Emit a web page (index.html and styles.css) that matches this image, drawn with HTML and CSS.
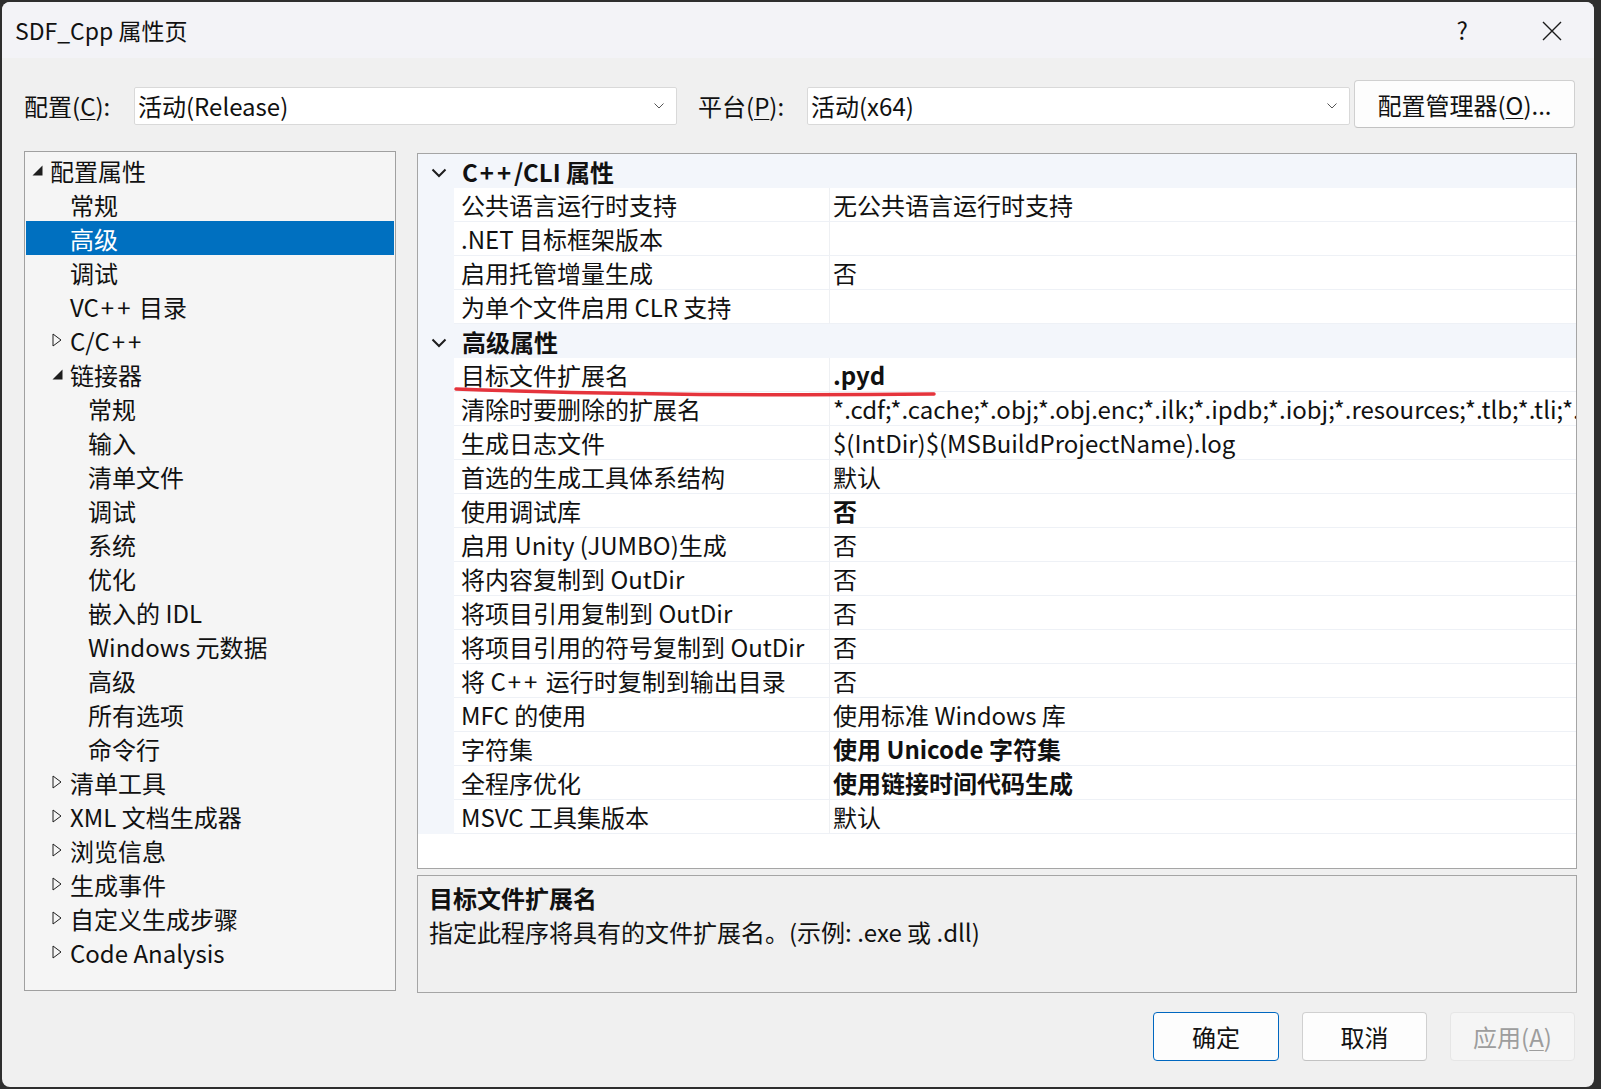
FILE: index.html
```html
<!DOCTYPE html>
<html lang="zh-CN">
<head>
    <meta charset="UTF-8">
    <title>SDF_Cpp 属性页</title>
    <link rel="stylesheet" href="styles.css">
</head>
<body>
<div class="dialog">
    <div class="titlebar">
        <span class="title">SDF_Cpp 属性页</span>
        <span class="help">?</span>
        <svg class="close" width="20" height="20" viewBox="0 0 20 20"><path d="M1 1L19 19M19 1L1 19" stroke="#1a1a1a" stroke-width="1.4" fill="none"/></svg>
    </div>

    <div class="config-row">
        <span class="field-label">配置(<u>C</u>):</span>
        <div class="combo">
            <span class="combo-text">活动(Release)</span>
            <svg class="combo-arrow" width="10" height="6" viewBox="0 0 10 6"><path d="M0.5 0.5L5 5L9.5 0.5" stroke="#555" fill="none"/></svg>
        </div>
        <span class="field-label field-label-2">平台(<u>P</u>):</span>
        <div class="combo">
            <span class="combo-text">活动(x64)</span>
            <svg class="combo-arrow" width="10" height="6" viewBox="0 0 10 6"><path d="M0.5 0.5L5 5L9.5 0.5" stroke="#555" fill="none"/></svg>
        </div>
        <button class="btn btn-manager">配置管理器(<u>O</u>)...</button>
    </div>

    <div class="main">
        <div class="tree">
            <div class="node lvl0"><span class="twisty"><svg width="11" height="11" viewBox="0 0 11 11"><polygon points="10.5,0.5 10.5,10.5 0.5,10.5" fill="#1e1e1e"/></svg></span><span>配置属性</span></div>
            <div class="node lvl1"><span class="twisty"></span><span>常规</span></div>
            <div class="node lvl1 selected"><span class="twisty"></span><span>高级</span></div>
            <div class="node lvl1"><span class="twisty"></span><span>调试</span></div>
            <div class="node lvl1"><span class="twisty"></span><span>VC<span class="plus">++</span> 目录</span></div>
            <div class="node lvl1"><span class="twisty"><svg width="10" height="14" viewBox="0 0 10 14"><polygon points="1,1 9,7 1,13" fill="none" stroke="#1e1e1e"/></svg></span><span>C/C<span class="plus">++</span></span></div>
            <div class="node lvl1"><span class="twisty"><svg width="11" height="11" viewBox="0 0 11 11"><polygon points="10.5,0.5 10.5,10.5 0.5,10.5" fill="#1e1e1e"/></svg></span><span>链接器</span></div>
            <div class="node lvl2"><span class="twisty"></span><span>常规</span></div>
            <div class="node lvl2"><span class="twisty"></span><span>输入</span></div>
            <div class="node lvl2"><span class="twisty"></span><span>清单文件</span></div>
            <div class="node lvl2"><span class="twisty"></span><span>调试</span></div>
            <div class="node lvl2"><span class="twisty"></span><span>系统</span></div>
            <div class="node lvl2"><span class="twisty"></span><span>优化</span></div>
            <div class="node lvl2"><span class="twisty"></span><span>嵌入的 IDL</span></div>
            <div class="node lvl2"><span class="twisty"></span><span>Windows 元数据</span></div>
            <div class="node lvl2"><span class="twisty"></span><span>高级</span></div>
            <div class="node lvl2"><span class="twisty"></span><span>所有选项</span></div>
            <div class="node lvl2"><span class="twisty"></span><span>命令行</span></div>
            <div class="node lvl1"><span class="twisty"><svg width="10" height="14" viewBox="0 0 10 14"><polygon points="1,1 9,7 1,13" fill="none" stroke="#1e1e1e"/></svg></span><span>清单工具</span></div>
            <div class="node lvl1"><span class="twisty"><svg width="10" height="14" viewBox="0 0 10 14"><polygon points="1,1 9,7 1,13" fill="none" stroke="#1e1e1e"/></svg></span><span>XML 文档生成器</span></div>
            <div class="node lvl1"><span class="twisty"><svg width="10" height="14" viewBox="0 0 10 14"><polygon points="1,1 9,7 1,13" fill="none" stroke="#1e1e1e"/></svg></span><span>浏览信息</span></div>
            <div class="node lvl1"><span class="twisty"><svg width="10" height="14" viewBox="0 0 10 14"><polygon points="1,1 9,7 1,13" fill="none" stroke="#1e1e1e"/></svg></span><span>生成事件</span></div>
            <div class="node lvl1"><span class="twisty"><svg width="10" height="14" viewBox="0 0 10 14"><polygon points="1,1 9,7 1,13" fill="none" stroke="#1e1e1e"/></svg></span><span>自定义生成步骤</span></div>
            <div class="node lvl1"><span class="twisty"><svg width="10" height="14" viewBox="0 0 10 14"><polygon points="1,1 9,7 1,13" fill="none" stroke="#1e1e1e"/></svg></span><span>Code Analysis</span></div>
        </div>

        <div class="right">
            <div class="grid">
                <div class="cat"><svg class="cat-arrow" width="16" height="10" viewBox="0 0 16 10"><path d="M1.5 1.5L8 8L14.5 1.5" stroke="#1e1e1e" stroke-width="2" fill="none"/></svg><span>C<span class="plus">++</span>/CLI 属性</span></div>
                <div class="prop"><div class="prop-name">公共语言运行时支持</div><div class="prop-value">无公共语言运行时支持</div></div>
                <div class="prop"><div class="prop-name">.NET 目标框架版本</div><div class="prop-value"></div></div>
                <div class="prop"><div class="prop-name">启用托管增量生成</div><div class="prop-value">否</div></div>
                <div class="prop"><div class="prop-name">为单个文件启用 CLR 支持</div><div class="prop-value"></div></div>
                <div class="cat"><svg class="cat-arrow" width="16" height="10" viewBox="0 0 16 10"><path d="M1.5 1.5L8 8L14.5 1.5" stroke="#1e1e1e" stroke-width="2" fill="none"/></svg><span>高级属性</span></div>
                <div class="prop"><div class="prop-name">目标文件扩展名</div><div class="prop-value bold">.pyd</div></div>
                <div class="prop"><div class="prop-name">清除时要删除的扩展名</div><div class="prop-value">*.cdf;*.cache;*.obj;*.obj.enc;*.ilk;*.ipdb;*.iobj;*.resources;*.tlb;*.tli;*.</div></div>
                <div class="prop"><div class="prop-name">生成日志文件</div><div class="prop-value">$(IntDir)$(MSBuildProjectName).log</div></div>
                <div class="prop"><div class="prop-name">首选的生成工具体系结构</div><div class="prop-value">默认</div></div>
                <div class="prop"><div class="prop-name">使用调试库</div><div class="prop-value bold">否</div></div>
                <div class="prop"><div class="prop-name">启用 Unity (JUMBO)生成</div><div class="prop-value">否</div></div>
                <div class="prop"><div class="prop-name">将内容复制到 OutDir</div><div class="prop-value">否</div></div>
                <div class="prop"><div class="prop-name">将项目引用复制到 OutDir</div><div class="prop-value">否</div></div>
                <div class="prop"><div class="prop-name">将项目引用的符号复制到 OutDir</div><div class="prop-value">否</div></div>
                <div class="prop"><div class="prop-name">将 C<span class="plus">++</span> 运行时复制到输出目录</div><div class="prop-value">否</div></div>
                <div class="prop"><div class="prop-name">MFC 的使用</div><div class="prop-value">使用标准 Windows 库</div></div>
                <div class="prop"><div class="prop-name">字符集</div><div class="prop-value bold">使用 Unicode 字符集</div></div>
                <div class="prop"><div class="prop-name">全程序优化</div><div class="prop-value bold">使用链接时间代码生成</div></div>
                <div class="prop"><div class="prop-name">MSVC 工具集版本</div><div class="prop-value">默认</div></div>
            </div>
            <div class="desc">
                <div class="desc-title">目标文件扩展名</div>
                <div class="desc-text">指定此程序将具有的文件扩展名。(示例: .exe 或 .dll)</div>
            </div>
        </div>
    </div>

    <div class="footer">
        <button class="btn btn-ok">确定</button>
        <button class="btn">取消</button>
        <button class="btn btn-disabled">应用(<u>A</u>)</button>
    </div>

    <!-- red hand-drawn mark under the selected property -->
    <svg class="mark" width="520" height="40" viewBox="0 0 520 40"><path d="M14 17Q250 25 492 22" stroke="#e5343c" stroke-width="3.5" stroke-linecap="round" fill="none"/></svg>
</div>
</body>
</html>
```

FILE: styles.css
```css
*{
    padding: 0;
    margin: 0;
    box-sizing: border-box;
}
html, body{
    background: #2e2e2e;
}
body{
    font-family: "Noto Sans CJK SC", sans-serif;
    font-size: 24px;
    color: #111;
}
u{
    text-underline-offset: 3px;
    text-decoration-thickness: 1px;
}
.plus{
    letter-spacing: 3px;
    padding-left: 2px;
}
.dialog{
    position: relative;
    margin: 2px 0 0 2px;
    width: 1592px;
    height: 1085px;
    background: #f0f0f0;
    border-radius: 8px;
    overflow: hidden;
}

/* title bar */
.titlebar{
    height: 56px;
    background: #f3f3f7;
    display: flex;
    align-items: center;
    padding-left: 13px;
}
.title{
    flex: 1;
    font-size: 23px;
    line-height: 56px;
}
.help{
    margin-right: 74px;
    line-height: 56px;
}
.close{
    margin-right: 32px;
    margin-top: 2px;
}

/* configuration row */
.config-row{
    display: flex;
    align-items: flex-start;
    padding: 22px 0 0 22px;
    height: 93px;
}
.field-label{
    width: 110px;
    line-height: 38px;
    margin-top: 7px;
}
.field-label-2{
    width: 109px;
    margin-left: 21px;
}
.combo{
    width: 543px;
    height: 38px;
    margin-top: 7px;
    background: #fff;
    border: 1px solid #d9d9d9;
    border-radius: 2px;
    display: flex;
    align-items: center;
    padding: 0 12px 0 3px;
}
.combo-text{
    flex: 1;
    line-height: 36px;
}
.btn{
    font-family: inherit;
    font-size: 24px;
    color: #111;
    background: #fdfdfd;
    border: 1px solid #d0d0d0;
    border-bottom-color: #c2c2c2;
    border-radius: 4px;
    width: 125px;
    height: 49px;
}
.btn-manager{
    width: 221px;
    height: 48px;
    margin-left: 4px;
}

/* main area */
.main{
    display: flex;
    padding-left: 22px;
    height: 842px;
}
.tree{
    width: 372px;
    height: 840px;
    background: #f5f5f5;
    border: 1px solid #a0a0a0;
    padding: 1px 1px 0 1px;
}
.node{
    display: flex;
    align-items: center;
    height: 34px;
    white-space: nowrap;
}
.twisty{
    width: 18px;
    height: 34px;
    display: flex;
    align-items: center;
}
.lvl0{
    padding-left: 6px;
}
.lvl1{
    padding-left: 26px;
}
.lvl2{
    padding-left: 44px;
}
.selected{
    background: #0070c0;
    color: #fff;
}

.right{
    margin-left: 21px;
    width: 1160px;
    padding-top: 2px;
}
.grid{
    height: 716px;
    background: #fff;
    border: 1px solid #a5a5a5;
    overflow: hidden;
}
.cat{
    height: 34px;
    background: #f3f6fb;
    display: flex;
    align-items: center;
    font-weight: bold;
    padding-left: 13px;
}
.cat-arrow{
    margin-right: 15px;
    margin-top: 3px;
}
.prop{
    display: flex;
    height: 34px;
    background: #f3f6fb;
}
.prop-name{
    margin-left: 36px;
    width: 376px;
    flex: none;
    background: #fff;
    border-bottom: 1px solid #eef1f6;
    border-right: 1px solid #eef0f3;
    padding-left: 7px;
    line-height: 33px;
    white-space: nowrap;
}
.prop-value{
    flex: 1;
    min-width: 0;
    background: #fff;
    border-bottom: 1px solid #eef1f6;
    padding-left: 3px;
    line-height: 33px;
    white-space: nowrap;
    overflow: hidden;
}
.bold{
    font-weight: bold;
}
.desc{
    margin-top: 6px;
    height: 118px;
    background: #f0f0f0;
    border: 1px solid #a5a5a5;
    padding: 5px 0 0 11px;
}
.desc-title{
    font-weight: bold;
    line-height: 34px;
}
.desc-text{
    line-height: 34px;
}

/* bottom buttons */
.footer{
    display: flex;
    justify-content: flex-end;
    gap: 23px;
    padding: 19px 19px 0 0;
}
.btn-ok{
    width: 126px;
    border: 1px solid #0067c0;
}
.btn-disabled{
    background: #f5f5f5;
    border-color: #e6e6e6;
    color: #9d9d9d;
}

.mark{
    position: absolute;
    left: 440px;
    top: 370px;
    pointer-events: none;
}
```
